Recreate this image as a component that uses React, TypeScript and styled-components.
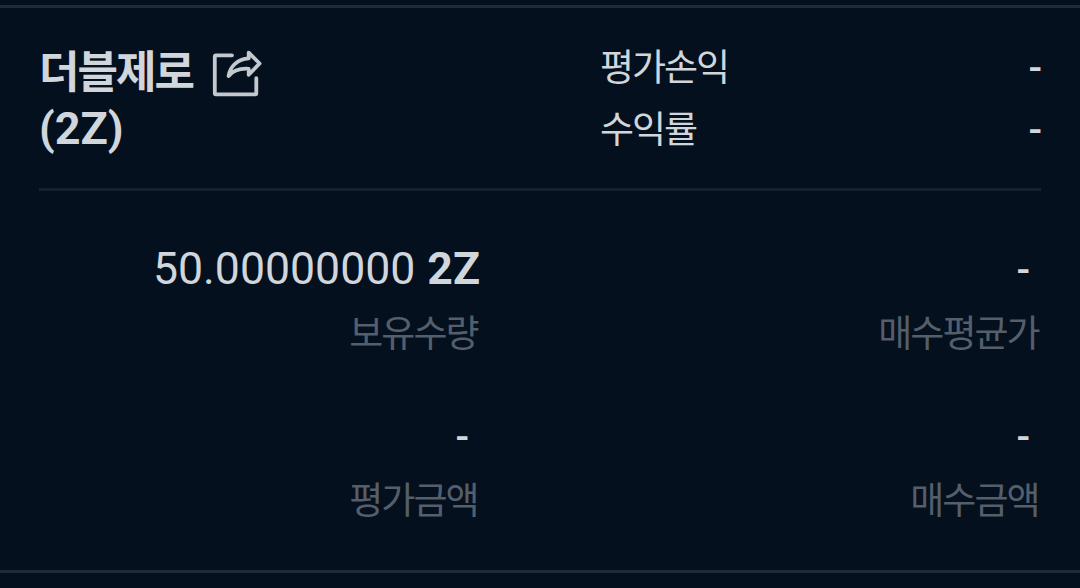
import { FC } from 'react';
import styled, { createGlobalStyle } from 'styled-components';

interface IPropsItem {
  label: string;
  value: string;
  unit?: string;
}

const Item: FC<IPropsItem> = ({ label, value, unit }) => (
  <ItemBox>
    <ItemValue $empty={!unit}>
      {value}
      {unit && <Unit>{unit}</Unit>}
    </ItemValue>
    <ItemLabel>{label}</ItemLabel>
  </ItemBox>
);

const App: FC = () => {
  return (
    <>
      <GlobalStyle />
      <Card>
        <Header>
          <TitleWrap>
            <Title>
              더블제로
              <Ticker>(2Z)</Ticker>
            </Title>
            <ShareIcon viewBox='0 0 52 50'>
              <path d='M21 5.3H4.8Q3.8 5.3 3.8 6.3V43.3Q3.8 44.3 4.8 44.3H44.3Q45.3 44.3 45.3 43.3V28.2' />
              <path d='M37.7 2.6L48.6 13.5L37.7 24.8V18.8C28.5 18.2 22 20.5 17.6 26C19 16.5 26.5 9.2 37.7 8.4Z' />
            </ShareIcon>
          </TitleWrap>
          <Profit>
            <ProfitRow>
              <ProfitLabel>평가손익</ProfitLabel>
              <ProfitValue>-</ProfitValue>
            </ProfitRow>
            <ProfitRow>
              <ProfitLabel>수익률</ProfitLabel>
              <ProfitValue>-</ProfitValue>
            </ProfitRow>
          </Profit>
        </Header>
        <ItemGrid>
          <Item label='보유수량' value='50.00000000' unit='2Z' />
          <Item label='매수평균가' value='-' />
          <Item label='평가금액' value='-' />
          <Item label='매수금액' value='-' />
        </ItemGrid>
      </Card>
    </>
  );
};

const GlobalStyle = createGlobalStyle`
  * {
    box-sizing: border-box;
  }

  body {
    margin: 0;
    background: #04101D;
    color: #D1D6DC;
    font-family: Roboto, 'Noto Sans CJK KR', sans-serif;
  }
`;

const Card = styled.section`
  height: 568px;
  margin-top: 5px;
  margin-bottom: 10px;
  padding: 0 39px;
  border-top: 3px solid #1F2B3A;
  border-bottom: 3px solid #1F2B3A;
  overflow: hidden;
`;

const Header = styled.header`
  height: 183px;
  padding-top: 36px;
  display: grid;
  grid-template-columns: 561px 1fr;
  border-bottom: 3px solid #152130;
`;

const TitleWrap = styled.div`
  display: flex;
  align-items: flex-start;
  gap: 18px;
`;

const Title = styled.h1`
  margin: 0;
  font-size: 44px;
  font-weight: 700;
  line-height: 58px;
  letter-spacing: -2px;
`;

const Ticker = styled.span`
  display: block;
  font-size: 45px;
  line-height: 54px;
  letter-spacing: 0;
`;

const ShareIcon = styled.svg`
  width: 52px;
  height: 50px;
  margin-top: 6px;
  fill: none;
  stroke: #C3C8CF;
  stroke-width: 3.8;
  stroke-linecap: round;
  stroke-linejoin: round;
`;

const Profit = styled.div`
  display: flex;
  flex-direction: column;
`;

const ProfitRow = styled.div`
  height: 62px;
  display: flex;
  justify-content: space-between;
`;

const ProfitLabel = styled.span`
  font-size: 37px;
  line-height: 50px;
  letter-spacing: -2px;
`;

const ProfitValue = styled.span`
  margin-right: -1px;
  font-size: 40px;
  font-weight: 500;
  line-height: 50px;
`;

const ItemGrid = styled.div`
  padding-top: 48px;
  display: grid;
  grid-template-columns: 441px 1fr;
  grid-auto-rows: 167px;
`;

const ItemBox = styled.div`
  display: flex;
  flex-direction: column;
  align-items: flex-end;
`;

const ItemValue = styled.p<{ $empty: boolean }>`
  height: 64px;
  margin: 0;
  padding-right: ${(props) => (props.$empty ? '11px' : '0')};
  font-size: ${(props) => (props.$empty ? '40px' : '44.6px')};
  font-weight: ${(props) => (props.$empty ? 500 : 400)};
  line-height: ${(props) => (props.$empty ? '64px' : '60px')};
`;

const Unit = styled.strong`
  margin-left: 12px;
  font-weight: 700;
`;

const ItemLabel = styled.p`
  margin: 0;
  padding-right: 2.5px;
  font-size: 37px;
  line-height: 64px;
  letter-spacing: -2px;
  color: #555E6B;
`;

export default App;
